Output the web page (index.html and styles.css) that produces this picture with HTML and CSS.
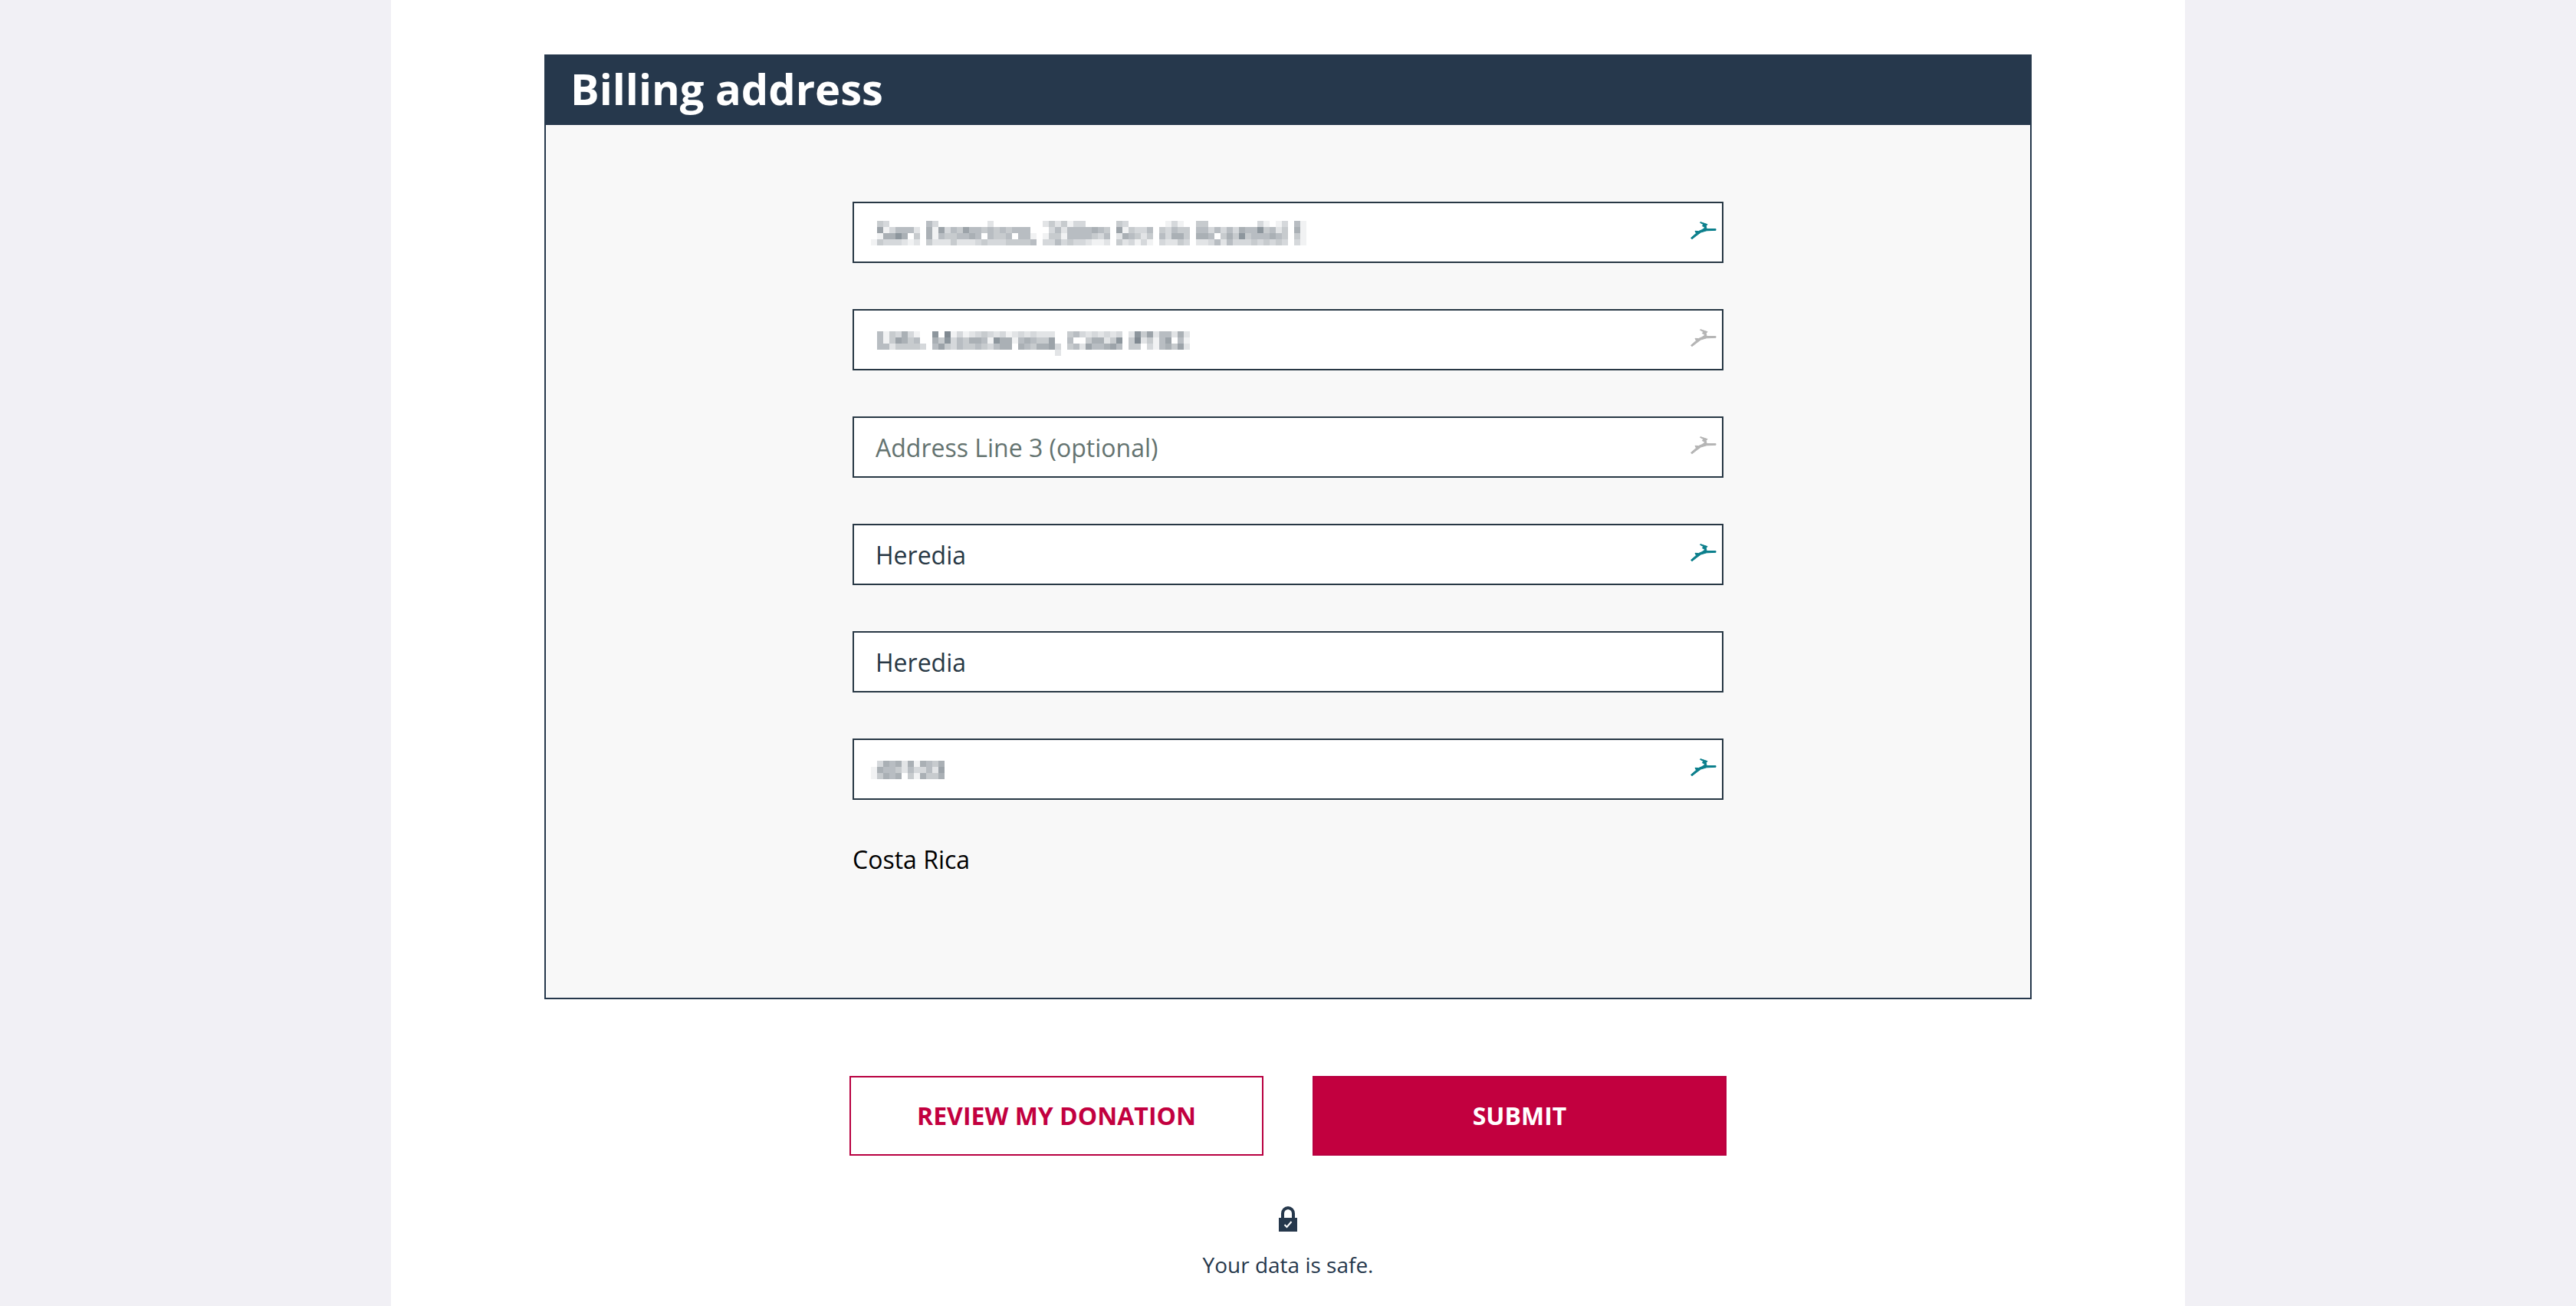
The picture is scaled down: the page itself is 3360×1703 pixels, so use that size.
FILE: index.html
```html
<!DOCTYPE html>
<html lang="en">
<head>
<meta charset="utf-8">
<meta name="viewport" content="width=device-width, initial-scale=1">
<title>Billing address</title>
<link rel="stylesheet" href="styles.css">
</head>
<body>
<svg class="sprite" aria-hidden="true">
  <symbol id="bird" viewBox="0 0 34 24">
    <path d="M.5 21.300 7.500 15.200 6 12.300 10.500 12.600 14.500 10.800 18 8.800 18.300 6.800 15.500 5.800 16 4.600 18.300 4.400 12.500 1.300 13 .6 22 3.600 20.300 5.600 21 9.500 33 9.500 33 11.300 21 11.800 13.500 14 8 18 2 22.700Z" fill="currentColor" stroke="currentColor" stroke-width="1" stroke-linejoin="round"/>
  </symbol>
</svg>
<main class="page">
  <form class="form">
    <section class="card">
      <h2 class="card-title">Billing address</h2>
      <div class="fields">
        <div class="field">
          <input class="input" type="text" aria-label="Address line 1">
          <svg class="mosaic mosaic-tall" data-rows="04300000053000000002000000002424133000004300000013100440000000031013051 07135552061735475545454555000352555565407143350435440553535365584524061 01668604061544556505445055101441555543502654240536640665046484555654041 14333212042224222343334444503353433211204231310322430223525333434343031"></svg>
          <svg class="bird bird-active" aria-hidden="true"><use href="#bird"/></svg>
        </div>
        <div class="field">
          <input class="input" type="text" aria-label="Address line 2">
          <svg class="mosaic" data-rows="0514363100809131234323123232220045323232302847255262 0514764500648354665186615654470050046624804924157051 0552444430574354454356606546673045275567504403156472 0000000000000000000000000000002000000000000000000000"></svg>
          <svg class="bird" aria-hidden="true"><use href="#bird"/></svg>
        </div>
        <div class="field">
          <input class="input" type="text" aria-label="Address line 3" placeholder="Address Line 3 (optional)">
          <svg class="bird" aria-hidden="true"><use href="#bird"/></svg>
        </div>
        <div class="field">
          <input class="input" type="text" aria-label="City" value="Heredia">
          <svg class="bird bird-active" aria-hidden="true"><use href="#bird"/></svg>
        </div>
        <div class="field">
          <input class="input" type="text" aria-label="Province" value="Heredia">
        </div>
        <div class="field">
          <input class="input" type="text" aria-label="Postal code">
          <svg class="mosaic" data-rows="036562616546 165542533527 146560416446"></svg>
          <svg class="bird bird-active" aria-hidden="true"><use href="#bird"/></svg>
        </div>
        <p class="country">Costa Rica</p>
      </div>
    </section>
    <div class="actions">
      <button class="button" type="button">REVIEW MY DONATION</button>
      <button class="button button-primary" type="submit">SUBMIT</button>
    </div>
    <div class="safe">
      <svg class="lock" viewBox="0 0 24 34" aria-hidden="true">
        <path d="M5 17V9.500a7 7.500 0 0 1 14 0V17" fill="none" stroke="currentColor" stroke-width="4"/>
        <path d="M0 15H24V33H0Z" fill="currentColor"/>
        <path d="M7.500 24 10.500 27 16.500 20" fill="none" stroke="#fff" stroke-width="2"/>
      </svg>
      <p class="safe-text">Your data is safe.</p>
    </div>
  </form>
</main>
<script src="mosaic.js"></script>
</body>
</html>
```
FILE: styles.css
```css
* {
  box-sizing: border-box;
}

body {
  margin: 0;
  background: #f1f0f5;
  color: #26384c;
  font-family: "Open Sans", "Noto Sans", sans-serif;
  font-size: 32px;
  line-height: 44px;
}

h2,
p {
  margin: 0;
}

.sprite {
  display: none;
}

.page {
  max-width: 2340px;
  min-height: 100vh;
  margin: 0 auto;
  padding: 71px 200px 32px;
  background: #fff;
}

@media (max-width: 1400px) {
  .page {
    padding-left: 24px;
    padding-right: 24px;
  }
}

.card {
  border: 2px solid #26384c;
  background: #f8f8f8;
}

.card-title {
  padding: 2px 32px 8px;
  background: #26384c;
  color: #fff;
  font-size: 56px;
  line-height: 80px;
  font-weight: 700;
}

.fields {
  display: flex;
  flex-direction: column;
  gap: 60px;
  max-width: 1184px;
  margin: 0 auto;
  padding: 100px 24px 158px;
}

.field {
  position: relative;
}

.input {
  display: block;
  width: 100%;
  height: 80px;
  padding: 0 28px;
  border: 2px solid #283845;
  border-radius: 0;
  background: #fff;
  color: #283845;
  font: inherit;
}

.input::placeholder {
  color: #647370;
  opacity: 1;
}

.mosaic {
  position: absolute;
  left: 24px;
  top: 29px;
  fill: #283845;
  shape-rendering: crispEdges;
  pointer-events: none;
}

.mosaic-tall {
  top: 25px;
}

.bird {
  position: absolute;
  right: 9px;
  top: 26px;
  width: 34px;
  height: 24px;
  color: #b5b5b5;
}

.bird-active {
  color: #0b7f8c;
}

.country {
  margin-top: -4px;
  color: #000;
}

.actions {
  display: flex;
  justify-content: center;
  gap: 64px;
  margin-top: 100px;
}

.button {
  flex: 0 1 540px;
  height: 104px;
  padding: 0 24px;
  border: 2px solid #b80040;
  border-radius: 0;
  background: #fff;
  color: #c2003f;
  font: inherit;
  font-weight: 700;
}

.button-primary {
  background: #c2003f;
  color: #fff;
}

.safe {
  display: flex;
  flex-direction: column;
  align-items: center;
  gap: 24px;
  margin-top: 66px;
}

.lock {
  width: 24px;
  height: 34px;
}

.safe-text {
  font-size: 28px;
  line-height: 36px;
}
```
FILE: mosaic.js
```js
// Draws the privacy mosaic over a masked value: one digit per tile, 0 is clear.
const TILE = 8;

document.querySelectorAll(".mosaic").forEach((svg) => {
  const rows = svg.dataset.rows.split(" ");
  svg.setAttribute("width", Math.max(...rows.map((row) => row.length)) * TILE);
  svg.setAttribute("height", rows.length * TILE);
  rows.forEach((row, y) => {
    [...row].forEach((level, x) => {
      if (level === "0") return;
      const tile = document.createElementNS("http://www.w3.org/2000/svg", "rect");
      tile.setAttribute("x", x * TILE);
      tile.setAttribute("y", y * TILE);
      tile.setAttribute("width", TILE);
      tile.setAttribute("height", TILE);
      tile.setAttribute("fill-opacity", level * 0.066);
      svg.append(tile);
    });
  });
});
```
